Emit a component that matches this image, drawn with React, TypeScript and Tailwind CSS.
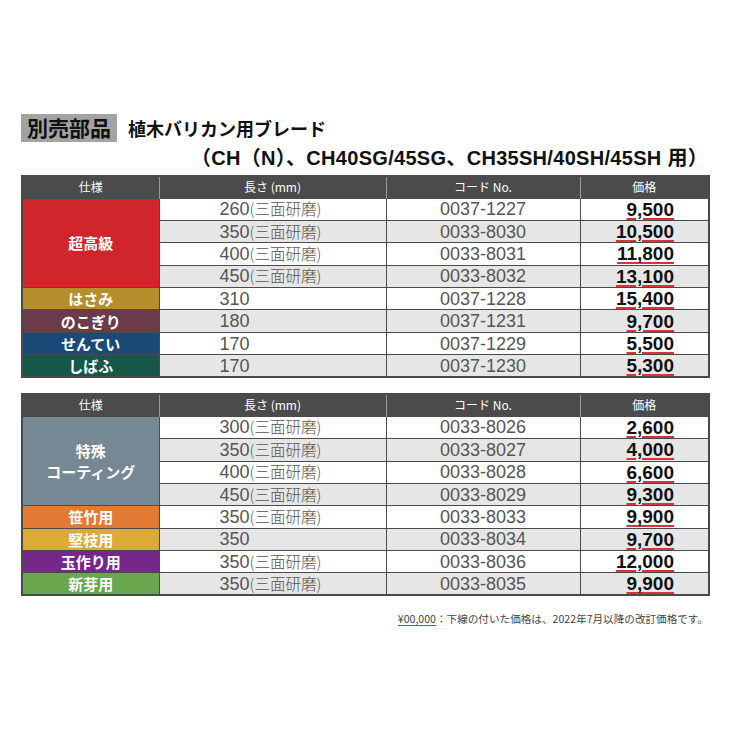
const jp = '"Noto Sans CJK JP", "Noto Sans", sans-serif'
const num = '"Liberation Sans", "Noto Sans CJK JP", sans-serif'

type Row = { len: string; note?: boolean; code: string; price: string }
type Group = { label: string[]; bg: string; rows: Row[] }

const table1: Group[] = [
  {
    label: ['超高級'],
    bg: 'bg-[#d0262b]',
    rows: [
      { len: '260', note: true, code: '0037-1227', price: '9,500' },
      { len: '350', note: true, code: '0033-8030', price: '10,500' },
      { len: '400', note: true, code: '0033-8031', price: '11,800' },
      { len: '450', note: true, code: '0033-8032', price: '13,100' },
    ],
  },
  { label: ['はさみ'], bg: 'bg-[#b48f2c]', rows: [{ len: '310', code: '0037-1228', price: '15,400' }] },
  { label: ['のこぎり'], bg: 'bg-[#6b3a4b]', rows: [{ len: '180', code: '0037-1231', price: '9,700' }] },
  { label: ['せんてい'], bg: 'bg-[#1c4a78]', rows: [{ len: '170', code: '0037-1229', price: '5,500' }] },
  { label: ['しばふ'], bg: 'bg-[#165848]', rows: [{ len: '170', code: '0037-1230', price: '5,300' }] },
]

const table2: Group[] = [
  {
    label: ['特殊', 'コーティング'],
    bg: 'bg-[#768893]',
    rows: [
      { len: '300', note: true, code: '0033-8026', price: '2,600' },
      { len: '350', note: true, code: '0033-8027', price: '4,000' },
      { len: '400', note: true, code: '0033-8028', price: '6,600' },
      { len: '450', note: true, code: '0033-8029', price: '9,300' },
    ],
  },
  { label: ['笹竹用'], bg: 'bg-[#e27a33]', rows: [{ len: '350', note: true, code: '0033-8033', price: '9,900' }] },
  { label: ['堅枝用'], bg: 'bg-[#dcab36]', rows: [{ len: '350', code: '0033-8034', price: '9,700' }] },
  { label: ['玉作り用'], bg: 'bg-[#76288a]', rows: [{ len: '350', note: true, code: '0033-8036', price: '12,000' }] },
  { label: ['新芽用'], bg: 'bg-[#69a64d]', rows: [{ len: '350', note: true, code: '0033-8035', price: '9,900' }] },
]

function PriceTable({ groups }: { groups: Group[] }) {
  let idx = 0
  return (
    <table className="w-[687px] table-fixed border-collapse border-2 border-[#4a4a4a]">
      <colgroup>
        <col className="w-[137px]" />
        <col className="w-[227px]" />
        <col className="w-[194px]" />
        <col className="w-[129px]" />
      </colgroup>
      <thead>
        <tr className="h-[22px] bg-[#4b4b4b] text-white text-[12px] leading-none" style={{ fontFamily: jp }}>
          <th className="p-0 font-normal border-r border-[#9a9a9a]">仕様</th>
          <th className="p-0 font-normal border-r border-[#9a9a9a]">長さ (mm)</th>
          <th className="p-0 font-normal border-r border-[#9a9a9a]">コード No.</th>
          <th className="p-0 font-normal">価格</th>
        </tr>
      </thead>
      <tbody>
        {groups.map((g) =>
          g.rows.map((r, i) => {
            const shade = idx++ % 2 === 1 ? 'bg-[#e6e6e6]' : 'bg-white'
            return (
              <tr key={r.code} className={`h-[22.4px] ${shade}`}>
                {i === 0 && (
                  <td
                    rowSpan={g.rows.length}
                    className={`${g.bg} p-0 border border-[#4a4a4a] text-center text-white font-bold text-[15px] leading-[21px]`}
                    style={{ fontFamily: jp }}
                  >
                    {g.label.map((l) => (
                      <div key={l}>{l}</div>
                    ))}
                  </td>
                )}
                <td
                  className="p-0 border border-[#4a4a4a] pl-[60px] text-[18px] leading-none text-[#555]"
                  style={{ fontFamily: num }}
                >
                  {r.len}
                  {r.note && (
                    <span className="text-[15.5px]" style={{ fontFamily: jp, fontWeight: 300 }}>
                      (三面研磨)
                    </span>
                  )}
                </td>
                <td
                  className="p-0 border border-[#4a4a4a] text-center text-[18px] leading-none text-[#555]"
                  style={{ fontFamily: num }}
                >
                  {r.code}
                </td>
                <td className="p-0 border border-[#4a4a4a] pr-[34px] text-right leading-none">
                  <span
                    className="text-[19px] font-bold text-[#111] underline decoration-[#d8323a] decoration-2 underline-offset-[2px]"
                    style={{ fontFamily: num }}
                  >
                    {r.price}
                  </span>
                </td>
              </tr>
            )
          })
        )}
      </tbody>
    </table>
  )
}

export default function App() {
  return (
    <div className="w-[733px] h-[733px] bg-white pl-[21px] pt-[114px]" style={{ fontFamily: jp }}>
      <div className="flex items-center">
        <div className="w-[96px] h-[28px] bg-[#a3a3a3] flex items-center justify-center text-[21px] font-bold text-[#111]">
          別売部品
        </div>
        <div className="ml-[11px] text-[18px] font-bold text-[#111]">植木バリカン用ブレード</div>
      </div>
      <div
        className="w-[687px] text-right text-[20px] font-bold text-[#111] leading-[26px] tracking-[0.3px] mt-[3px] mb-[4px]"
        style={{ fontFamily: num }}
      >
        （CH（N）、CH40SG/45SG、CH35SH/40SH/45SH 用）
      </div>
      <PriceTable groups={table1} />
      <div className="h-[15px]" />
      <PriceTable groups={table2} />
      <div className="w-[687px] text-right text-[10.6px] text-[#444] mt-[15px]">
        <span className="underline decoration-[#d8323a] underline-offset-2">¥00,000</span>：下線の付いた価格は、2022年7月以降の改訂価格です。
      </div>
    </div>
  )
}
